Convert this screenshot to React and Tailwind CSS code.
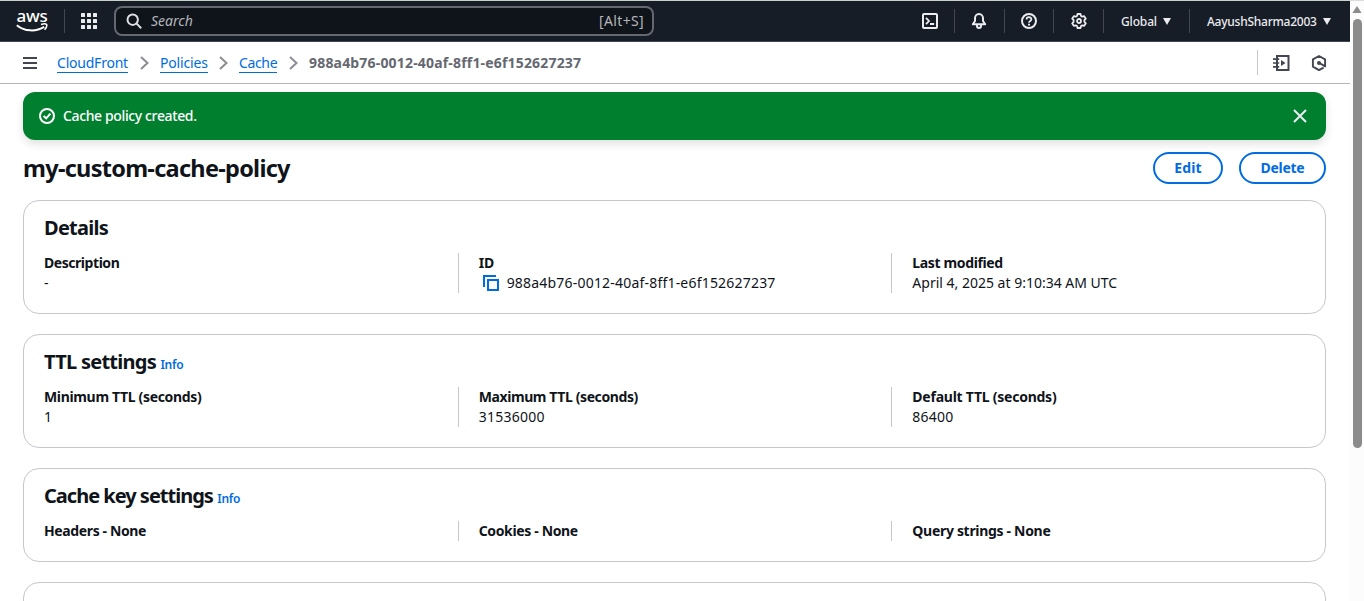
import React from "react";

const Svg = ({ children, className = "size-4", ...rest }) => (
  <svg viewBox="0 0 16 16" fill="none" stroke="currentColor" strokeWidth="2" className={className} {...rest}>
    {children}
  </svg>
);

const AwsLogo = () => (
  <div className="flex h-[21px] w-8 flex-col items-center text-white">
    <span className="h-[12px] font-['Noto_Sans',sans-serif] text-[17px] leading-[10px] font-medium tracking-[-0.3px]">aws</span>
    <svg viewBox="0 0 32 9" className="h-[9px] w-8" fill="none" stroke="currentColor">
      <path d="M0.8 2.2C8.5 8.6 20 9 28.2 3.9" strokeWidth="2" />
      <path d="M25 1.4C27.5 0.7 30 0.8 30.6 1.5C31 2.4 30 5.2 28.6 6.8" strokeWidth="1.6" />
    </svg>
  </div>
);

const Grid = () => (
  <Svg className="size-4" fill="currentColor" stroke="none">
    {[0, 6, 12].map((y) => [0, 6, 12].map((x) => <rect key={`${x}-${y}`} x={x} y={y} width="4" height="4" rx="0.5" />))}
  </Svg>
);

const Separator = () => <div className="h-6 w-px bg-[#424650]" />;

const Caret = () => (
  <svg viewBox="0 0 8 7" className="h-[7px] w-2" fill="currentColor">
    <path d="M0 0H8L4 7Z" />
  </svg>
);

function TopNav() {
  return (
    <header className="flex h-[42px] items-center border-t border-b border-t-[#c9cfc9] border-b-[#424650] bg-[#161d26] text-[#ebebf0]">
      <div className="ml-4 w-12">
        <AwsLogo />
      </div>
      <Separator />
      <div className="ml-4">
        <Grid />
      </div>
      <div className="ml-[17px] flex h-[30px] w-[540px] items-center rounded-lg border-2 border-[#656871] bg-[#0f141a] pr-2 pl-[10px]">
        <Svg className="size-4 text-[#dedee3]">
          <circle cx="6.7" cy="6.7" r="5.2" />
          <path d="M10.4 10.4L15.2 15.2" />
        </Svg>
        <span className="ml-[9px] grow text-sm text-[#b4b4bb] italic">Search</span>
        <span className="text-sm tracking-[0.35px] text-[#b4b4bb]">[Alt+S]</span>
      </div>
      <div className="ml-[268px] flex items-center">
        <Svg>
          <rect x="1" y="1" width="14" height="14" rx="1" />
          <path d="M4 4.8L7 8L4 11.2M8 11H12.2" strokeWidth="1.8" />
        </Svg>
        <div className="ml-4"><Separator /></div>
        <Svg className="ml-4 size-4">
          <path d="M8 1C5.5 1 4 3 4 5.3V8L1.8 11.2H14.2L12 8V5.3C12 3 10.5 1 8 1Z" strokeLinejoin="round" />
          <path d="M6 12V13C6 14.3 6.8 15 8 15S10 14.3 10 13V12" />
        </Svg>
        <div className="ml-[17px]"><Separator /></div>
        <Svg className="ml-4 size-4">
          <circle cx="8" cy="8" r="7" />
          <path d="M5.6 6.5C5.6 3.4 10.4 3.5 10.4 6.3C10.4 8 8 7.9 8 9.7" strokeWidth="1.8" />
          <path d="M8 10.8V12.6" />
        </Svg>
        <div className="ml-4"><Separator /></div>
        <Svg className="ml-[17px] size-4">
          <path d="M6.5 1H9.5L10 3L11.3 3.7L13.2 3.1L14.8 5.7L13.4 7.2V8.8L14.8 10.3L13.2 12.9L11.3 12.3L10 13L9.5 15H6.5L6 13L4.7 12.3L2.8 12.9L1.2 10.3L2.6 8.8V7.2L1.2 5.7L2.8 3.1L4.7 3.7L6 3Z" strokeLinejoin="round" strokeWidth="1.8" />
          <circle cx="8" cy="8" r="2" strokeWidth="1.8" />
        </Svg>
        <div className="ml-4"><Separator /></div>
        <div className="ml-[17px] flex w-[50px] items-center justify-between pt-px text-xs font-medium tracking-[-0.15px]">
          Global
          <Caret />
        </div>
        <div className="ml-[18px]"><Separator /></div>
        <div className="ml-[17px] flex w-[124px] items-center justify-between pt-px text-xs font-medium tracking-[-0.25px]">
          AayushSharma2003
          <Caret />
        </div>
      </div>
    </header>
  );
}

const Chevron = () => (
  <svg viewBox="0 0 9 14" className="h-[14px] w-[9px] text-[#8c8c94]" fill="none" stroke="currentColor" strokeWidth="2">
    <path d="M1 1L7.5 7L1 13" />
  </svg>
);

const Crumb = ({ className, children }) => (
  <a className={`border-b border-[#006ce0] text-sm leading-[19px] text-[#006ce0] ${className}`}>{children}</a>
);

function BreadcrumbBar() {
  return (
    <nav className="flex h-[42px] items-center border-b border-[#b4b4bb] pl-[23px]">
      <svg viewBox="0 0 14 12" className="h-3 w-[14px] text-[#424650]" stroke="currentColor" strokeWidth="2">
        <path d="M0 1H14M0 6H14M0 11H14" />
      </svg>
      <div className="ml-5 flex items-center">
        <Crumb className="w-[71px] tracking-[-0.22px]">CloudFront</Crumb>
        <div className="ml-3"><Chevron /></div>
        <Crumb className="ml-[11px] w-[47.5px] tracking-[-0.18px]">Policies</Crumb>
        <div className="ml-[11.5px]"><Chevron /></div>
        <Crumb className="ml-[11px] w-[38px] tracking-[-0.35px]">Cache</Crumb>
        <div className="ml-3"><Chevron /></div>
        <span className="ml-[11px] text-sm font-bold tracking-[0.18px] text-[#656871]">988a4b76-0012-40af-8ff1-e6f152627237</span>
      </div>
      <div className="mr-[23px] ml-auto flex items-center text-[#424650]">
        <div className="h-[25px] w-px bg-[#c6c6cd]" />
        <svg viewBox="0 0 17 16" className="ml-[15px] h-4 w-[17px]" fill="none" stroke="currentColor" strokeWidth="2">
          <path d="M4 4V1H15.5V15H4V4" />
          <path d="M0 4.2H6.2M0 8H6.2M0 11.8H6.2" strokeWidth="1.7" />
          <path d="M8 5L12.5 8L8 11Z" fill="currentColor" stroke="none" />
        </svg>
        <Svg className="ml-[21px] size-4">
          <path d="M12.6 12.6L8 15.1L1.9 11.6V4.4L8 1L14.1 4.4V11.4L8 7.8" strokeLinejoin="round" strokeWidth="1.9" />
          <circle cx="8" cy="8" r="2" fill="currentColor" stroke="none" />
        </Svg>
      </div>
    </nav>
  );
}

const Button = ({ className, children }) => (
  <button className={`h-8 rounded-full border-2 border-[#006ce0] text-sm font-bold text-[#006ce0] ${className}`}>{children}</button>
);

const Heading = ({ className, info, children }) => (
  <div className="flex items-baseline pl-5">
    <h2 className={`text-xl leading-6 font-bold whitespace-nowrap ${className}`}>{children}</h2>
    {info && <a className="ml-[4.5px] text-xs font-semibold tracking-[-0.3px] text-[#006ce0]">Info</a>}
  </div>
);

const Columns = ({ children }) => (
  <div className="mt-[13px] grid grid-cols-3">{children}</div>
);

const Field = ({ label, className, children }) => (
  <div className="border-l border-[#c6c6cd] pl-5 text-sm leading-5 first:border-l-0">
    <div className={`font-bold ${className}`}>{label}</div>
    {children}
  </div>
);

const Card = ({ className = "h-[114px]", children }) => (
  <section className={`rounded-2xl border border-[#c6c6cd] bg-white pt-[15px] ${className}`}>{children}</section>
);

const Copy = () => (
  <Svg className="mr-2 ml-1 size-4 text-[#006ce0]">
    <path d="M1 12V1H13" />
    <rect x="5" y="5" width="10" height="10" />
  </Svg>
);

export default function App() {
  return (
    <div className="flex h-[601px] overflow-hidden bg-white font-['Noto_Sans',sans-serif] text-[#0f141a]">
      <div className="w-[1350px] shrink-0">
        <TopNav />
        <BreadcrumbBar />
        <main className="pt-2 pr-6 pl-[23px]">
          <div className="flex h-12 items-center rounded-xl bg-[#00802f] pr-[19px] pl-4 text-white shadow-[0_4px_8px_rgba(0,7,22,0.12)]">
            <Svg>
              <circle cx="8" cy="8" r="7" />
              <path d="M4.6 8L7.2 10.3L11.4 5.7" />
            </Svg>
            <span className="ml-2 grow text-sm font-medium tracking-[-0.37px]">Cache policy created.</span>
            <svg viewBox="0 0 14 14" className="h-[14px] w-[14px] text-[#ebebf0]" stroke="currentColor" strokeWidth="2">
              <path d="M1 1L13 13M13 1L1 13" />
            </svg>
          </div>
          <div className="mt-3 flex items-center">
            <h1 className="grow pb-px text-[23.5px] leading-[30px] font-bold tracking-[-0.72px]">my-custom-cache-policy</h1>
            <Button className="w-[70px] tracking-[0.2px]">Edit</Button>
            <Button className="ml-4 w-[87px] tracking-[-0.3px]">Delete</Button>
          </div>
          <div className="mt-4 flex flex-col gap-5">
            <Card>
              <Heading className="tracking-[-0.75px]">Details</Heading>
              <Columns>
                <Field label="Description" className="tracking-[-0.45px]">-</Field>
                <Field label="ID">
                  <div className="flex items-center tracking-[0.2px]">
                    <Copy />
                    988a4b76-0012-40af-8ff1-e6f152627237
                  </div>
                </Field>
                <Field label="Last modified" className="tracking-[-0.36px]">April 4, 2025 at 9:10:34 AM UTC</Field>
              </Columns>
            </Card>
            <Card>
              <Heading info className="tracking-[-0.74px]">TTL settings</Heading>
              <Columns>
                <Field label="Minimum TTL (seconds)" className="tracking-[-0.34px]">1</Field>
                <Field label="Maximum TTL (seconds)" className="tracking-[-0.4px]"><span className="tracking-[0.25px]">31536000</span></Field>
                <Field label="Default TTL (seconds)" className="tracking-[-0.24px]"><span className="tracking-[0.25px]">86400</span></Field>
              </Columns>
            </Card>
            <Card className="h-[94px]">
              <Heading info className="tracking-[-1px]">Cache key settings</Heading>
              <Columns>
                <Field label="Headers - None" className="tracking-[-0.38px]" />
                <Field label="Cookies - None" className="tracking-[-0.35px]" />
                <Field label="Query strings - None" className="tracking-[-0.31px]" />
              </Columns>
            </Card>
            <Card />
          </div>
        </main>
      </div>
      <div className="flex w-[14px] flex-col items-center border-t border-[#dcdcdc] bg-[#fcfcfc]">
        <svg viewBox="0 0 10 7" className="mt-[5px] h-[7px] w-[10px]" fill="#8b8b8b">
          <path d="M5 0L9.6 7H0.4Z" />
        </svg>
        <div className="mt-[6px] ml-px h-[429px] w-[9px] rounded-full bg-[#8b8b8b]" />
      </div>
    </div>
  );
}
